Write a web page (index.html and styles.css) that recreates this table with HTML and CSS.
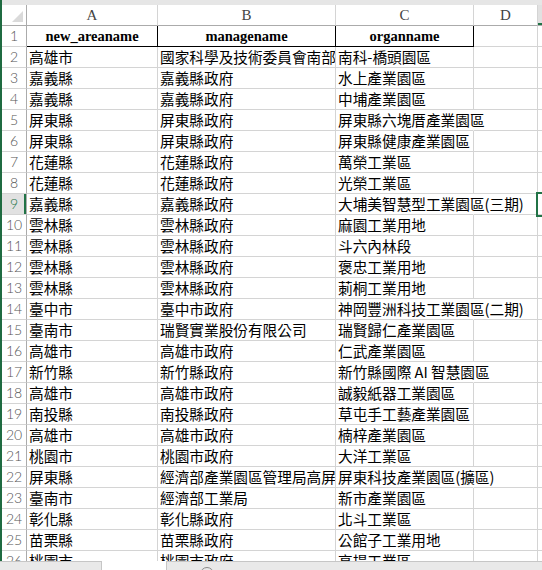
FILE: index.html
```html
<!DOCTYPE html>
<html lang="zh-Hant">
<head>
<meta charset="utf-8">
<title>Sheet1</title>
<link rel="stylesheet" href="styles.css">
</head>
<body>
<div class="app">
  <div class="top">
    <div class="band"></div>
    <div class="sheet">
      <div class="corner"><span class="tri"></span></div>
      <div class="ch">A</div><div class="ch">B</div><div class="ch">C</div><div class="ch">D</div><div class="ch on"></div>

      <div class="rh">1</div><div class="c hd">new_areaname</div><div class="c hd">managename</div><div class="c hd">organname</div><div class="c"></div><div class="c"></div>
      <div class="rh">2</div><div class="c">高雄市</div><div class="c">國家科學及技術委員會南部科學園區管理局</div><div class="c">南科-橋頭園區</div><div class="c"></div><div class="c"></div>
      <div class="rh">3</div><div class="c">嘉義縣</div><div class="c">嘉義縣政府</div><div class="c">水上產業園區</div><div class="c"></div><div class="c"></div>
      <div class="rh">4</div><div class="c">嘉義縣</div><div class="c">嘉義縣政府</div><div class="c">中埔產業園區</div><div class="c"></div><div class="c"></div>
      <div class="rh">5</div><div class="c">屏東縣</div><div class="c">屏東縣政府</div><div class="c sp">屏東縣六塊厝產業園區</div><div class="c"></div><div class="c"></div>
      <div class="rh">6</div><div class="c">屏東縣</div><div class="c">屏東縣政府</div><div class="c">屏東縣健康產業園區</div><div class="c"></div><div class="c"></div>
      <div class="rh">7</div><div class="c">花蓮縣</div><div class="c">花蓮縣政府</div><div class="c">萬榮工業區</div><div class="c"></div><div class="c"></div>
      <div class="rh">8</div><div class="c">花蓮縣</div><div class="c">花蓮縣政府</div><div class="c">光榮工業區</div><div class="c"></div><div class="c"></div>
      <div class="rh on">9</div><div class="c">嘉義縣</div><div class="c">嘉義縣政府</div><div class="c sp">大埔美智慧型工業園區(三期)</div><div class="c"></div><div class="c cur"></div>
      <div class="rh">10</div><div class="c">雲林縣</div><div class="c">雲林縣政府</div><div class="c">麻園工業用地</div><div class="c"></div><div class="c"></div>
      <div class="rh">11</div><div class="c">雲林縣</div><div class="c">雲林縣政府</div><div class="c">斗六內林段</div><div class="c"></div><div class="c"></div>
      <div class="rh">12</div><div class="c">雲林縣</div><div class="c">雲林縣政府</div><div class="c">褒忠工業用地</div><div class="c"></div><div class="c"></div>
      <div class="rh">13</div><div class="c">雲林縣</div><div class="c">雲林縣政府</div><div class="c">莿桐工業用地</div><div class="c"></div><div class="c"></div>
      <div class="rh">14</div><div class="c">臺中市</div><div class="c">臺中市政府</div><div class="c sp">神岡豐洲科技工業園區(二期)</div><div class="c"></div><div class="c"></div>
      <div class="rh">15</div><div class="c">臺南市</div><div class="c">瑞賢實業股份有限公司</div><div class="c">瑞賢歸仁產業園區</div><div class="c"></div><div class="c"></div>
      <div class="rh">16</div><div class="c">高雄市</div><div class="c">高雄市政府</div><div class="c">仁武產業園區</div><div class="c"></div><div class="c"></div>
      <div class="rh">17</div><div class="c">新竹縣</div><div class="c">新竹縣政府</div><div class="c sp">新竹縣國際 AI 智慧園區</div><div class="c"></div><div class="c"></div>
      <div class="rh">18</div><div class="c">高雄市</div><div class="c">高雄市政府</div><div class="c">誠毅紙器工業園區</div><div class="c"></div><div class="c"></div>
      <div class="rh">19</div><div class="c">南投縣</div><div class="c">南投縣政府</div><div class="c">草屯手工藝產業園區</div><div class="c"></div><div class="c"></div>
      <div class="rh">20</div><div class="c">高雄市</div><div class="c">高雄市政府</div><div class="c">楠梓產業園區</div><div class="c"></div><div class="c"></div>
      <div class="rh">21</div><div class="c">桃園市</div><div class="c">桃園市政府</div><div class="c">大洋工業區</div><div class="c"></div><div class="c"></div>
      <div class="rh">22</div><div class="c">屏東縣</div><div class="c">經濟部產業園區管理局高屏分局</div><div class="c sp">屏東科技產業園區(擴區)</div><div class="c"></div><div class="c"></div>
      <div class="rh">23</div><div class="c">臺南市</div><div class="c">經濟部工業局</div><div class="c">新市產業園區</div><div class="c"></div><div class="c"></div>
      <div class="rh">24</div><div class="c">彰化縣</div><div class="c">彰化縣政府</div><div class="c">北斗工業區</div><div class="c"></div><div class="c"></div>
      <div class="rh">25</div><div class="c">苗栗縣</div><div class="c">苗栗縣政府</div><div class="c">公館子工業用地</div><div class="c"></div><div class="c"></div>
      <div class="rh">26</div><div class="c">桃園市</div><div class="c">桃園市政府</div><div class="c">高場工業區</div><div class="c"></div><div class="c"></div>
    </div>
  </div>
  <div class="tabs">
    <div class="tabs-left"></div>
    <div class="tab">Sheet1</div>
    <div class="add"></div>
  </div>
</div>
</body>
</html>
```

FILE: styles.css
```css
html, body {
  margin: 0;
  padding: 0;
  background: #ffffff;
}

.app {
  width: 542px;
  height: 570px;
  overflow: hidden;
  display: flex;
  flex-direction: column;
}

.top {
  flex: 0 0 auto;
  border-left: 2px solid #1f6b41;
}

.band {
  height: 5px;
  background: #e6e6e6;
}

.sheet {
  display: grid;
  grid-template-columns: 25px 131px 178px 138px 64px 1fr;
  grid-auto-rows: 21px;
  height: 556px;
  overflow: hidden;
  background: #ffffff;
}

.sheet > div {
  box-sizing: border-box;
  border-right: 1px solid #d4d4d4;
  border-bottom: 1px solid #d4d4d4;
  white-space: nowrap;
  overflow: hidden;
}

.corner {
  background: #ffffff;
  display: flex;
  justify-content: flex-end;
  align-items: flex-end;
  padding: 0 3px 3px 0;
}
.sheet > .corner {
  border-right-color: #ababab;
  border-bottom-color: #ababab;
}
.tri {
  width: 11px;
  height: 11px;
  background: #dadada;
  clip-path: polygon(100% 0, 100% 100%, 0 100%);
}

.ch {
  background: #ffffff;
  font-family: "Liberation Serif", serif;
  font-size: 15px;
  line-height: 20px;
  color: #444444;
  text-align: center;
}
.sheet > .ch {
  border-bottom-color: #ababab;
}
.ch.on {
  background: #e1e1e1;
  box-shadow: inset 0 -2px 0 #217346;
}

.rh {
  font-family: "Lato", "Liberation Sans", sans-serif;
  font-weight: 300;
  font-size: 14px;
  line-height: 20px;
  color: #555555;
  text-align: center;
  background: #ffffff;
}
.sheet > .rh {
  border-right-color: #ababab;
}
.rh.on {
  background: #e1e1e1;
  color: #217346;
  box-shadow: inset -2px 0 0 #217346;
}

.c {
  padding: 0 2px;
  font-family: "Noto Sans CJK TC", "Noto Sans CJK SC", sans-serif;
  font-size: 14.67px;
  line-height: 20px;
  color: #000000;
}

.sheet > .hd {
  font-family: "Liberation Serif", serif;
  font-weight: bold;
  font-size: 14.5px;
  text-align: center;
  border-right-color: #000000;
  border-bottom-color: #000000;
}

.sheet > .sp {
  overflow: visible;
  border-right-color: #ffffff;
}

.sheet > .cur {
  overflow: visible;
  position: relative;
}
.cur::after {
  content: "";
  position: absolute;
  left: -2px;
  top: -2px;
  width: 20px;
  height: 21px;
  border: 2px solid #217346;
}

.tabs {
  flex: 0 0 26px;
  display: flex;
  background: #e9e9e9;
  border-top: 1px solid #c6c6c6;
}
.tabs-left {
  width: 101px;
}
.tab {
  width: 64px;
  margin-top: -1px;
  background: #ffffff;
  border-left: 1px solid #c6c6c6;
  border-right: 1px solid #c6c6c6;
  font-family: "Liberation Sans", sans-serif;
  font-size: 13px;
  line-height: 20px;
  padding-top: 4px;
  color: #217346;
  text-align: center;
}
.add {
  width: 12px;
  height: 12px;
  margin-left: 33px;
  margin-top: 5px;
  border: 1px solid #8a8a8a;
  border-radius: 50%;
}
```
